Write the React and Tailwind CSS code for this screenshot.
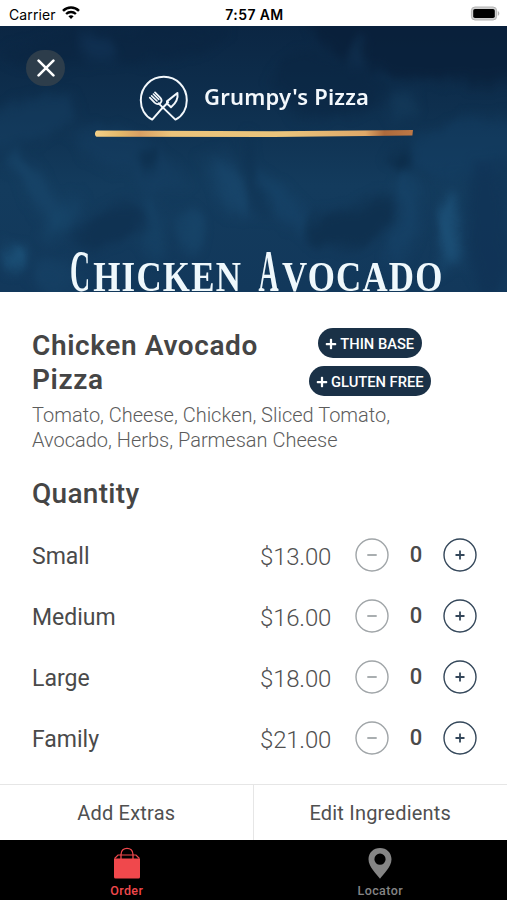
import { useState } from 'react';
import { FaPlus } from 'react-icons/fa';

const SIZES = [
    { name: 'Small', price: 13 },
    { name: 'Medium', price: 16 },
    { name: 'Large', price: 18 },
    { name: 'Family', price: 21 },
];

const TAGS = ['THIN BASE', 'GLUTEN FREE'];

// soft brush strokes of the painted hero background
const STROKES = [
    { x: 120, y: 20, rx: 110, ry: 18, r: -6, c: '#0a2440', o: 0.5 },
    { x: 440, y: 15, rx: 130, ry: 40, r: 8, c: '#091e38', o: 0.7 },
    { x: 330, y: 60, rx: 60, ry: 30, r: 10, c: '#0a2440', o: 0.5 },
    { x: 95, y: 25, rx: 16, ry: 14, r: 30, c: '#163f63', o: 0.4 },
    { x: 358, y: 28, rx: 8, ry: 14, r: 0, c: '#184264', o: 0.4 },
    { x: 402, y: 80, rx: 10, ry: 16, r: -10, c: '#184264', o: 0.45 },
    { x: 30, y: 95, rx: 50, ry: 22, r: -20, c: '#153f64', o: 0.5 },
    { x: 130, y: 130, rx: 60, ry: 20, r: 25, c: '#164166', o: 0.4 },
    { x: 470, y: 120, rx: 60, ry: 30, r: -10, c: '#144066', o: 0.5 },
    { x: 35, y: 165, rx: 14, ry: 45, r: -35, c: '#194a70', o: 0.5 },
    { x: 60, y: 190, rx: 9, ry: 34, r: 35, c: '#194a70', o: 0.4 },
    { x: 148, y: 134, rx: 14, ry: 9, r: 0, c: '#0c2c49', o: 0.7 },
    { x: 112, y: 200, rx: 40, ry: 22, r: -20, c: '#0e2f4f', o: 0.7 },
    { x: 152, y: 200, rx: 9, ry: 36, r: 0, c: '#184a70', o: 0.4 },
    { x: 190, y: 205, rx: 14, ry: 22, r: -25, c: '#194b72', o: 0.5 },
    { x: 226, y: 160, rx: 12, ry: 36, r: -25, c: '#1b4e76', o: 0.5 },
    { x: 285, y: 180, rx: 9, ry: 42, r: -40, c: '#194a70', o: 0.45 },
    { x: 253, y: 150, rx: 5, ry: 40, r: -12, c: '#0e2f4f', o: 0.6 },
    { x: 352, y: 200, rx: 46, ry: 20, r: -22, c: '#0d2d4b', o: 0.75 },
    { x: 403, y: 134, rx: 14, ry: 12, r: 0, c: '#0b2a47', o: 0.8 },
    { x: 403, y: 190, rx: 10, ry: 50, r: 8, c: '#194a70', o: 0.45 },
    { x: 448, y: 205, rx: 12, ry: 42, r: -4, c: '#215c86', o: 0.6 },
    { x: 488, y: 200, rx: 20, ry: 70, r: 0, c: '#0f3154', o: 0.6 },
    { x: 12, y: 232, rx: 10, ry: 14, r: -30, c: '#215f88', o: 0.6 },
    { x: 55, y: 250, rx: 24, ry: 16, r: 0, c: '#18486e', o: 0.4 },
];

function StatusBar() {
    return (
        <div className="flex h-[26px] shrink-0 items-center justify-between bg-white pr-[7px] pl-[9px] pt-[2px] font-['Inter',sans-serif] text-black">
            <div className="flex w-[120px] items-center gap-[6px]">
                <span className="text-[14px] tracking-[0.1px]">Carrier</span>
                <svg className="mb-[2px] h-[14px] w-[18px]" viewBox="0 0 18 14" fill="none">
                    <path d="M1 4.9 C5.5 0.5 12.5 0.5 17 4.9" stroke="black" strokeWidth="2.5" />
                    <path d="M4.1 8 C6.9 5.3 11.1 5.3 13.9 8" stroke="black" strokeWidth="2.4" />
                    <path d="M6.4 10.3 C7.9 8.9 10.1 8.9 11.6 10.3 L9 13 Z" fill="black" />
                </svg>
            </div>
            <span className="text-[14px] font-semibold tracking-[0.4px] whitespace-nowrap">7:57 AM</span>
            <div className="flex w-[120px] justify-end pb-[2px]">
                <svg className="h-[15px] w-[30px]" viewBox="0 0 30 15">
                    <rect x="1.4" y="1" width="25.2" height="13" rx="3.6" fill="#d0d0d0" stroke="#b4b4b4" strokeWidth="1" />
                    <rect x="3.2" y="3" width="21.6" height="9" rx="1.8" fill="#000" />
                    <path d="M27.8 5 C29.8 5.8 29.8 9 27.8 9.8 Z" fill="#b4b4b4" />
                </svg>
            </div>
        </div>
    );
}

function HeroBackdrop() {
    return (
        <svg className="absolute inset-0 h-full w-full" viewBox="0 0 507 266" preserveAspectRatio="none">
            <defs>
                <linearGradient id="sea" x1="0" y1="0" x2="0" y2="1">
                    <stop offset="0" stopColor="#0b2643" />
                    <stop offset="0.3" stopColor="#0e2f4e" />
                    <stop offset="0.6" stopColor="#133b5d" />
                    <stop offset="1" stopColor="#12385b" />
                </linearGradient>
                <filter id="soft" x="-20%" y="-20%" width="140%" height="140%" colorInterpolationFilters="sRGB">
                    <feGaussianBlur stdDeviation="6" result="blurred" />
                    <feTurbulence type="fractalNoise" baseFrequency="0.02 0.014" numOctaves="3" seed="4" result="noise" />
                    <feDisplacementMap in="blurred" in2="noise" scale="28" xChannelSelector="R" yChannelSelector="G" />
                </filter>
            </defs>
            <rect width="507" height="266" fill="url(#sea)" />
            <g filter="url(#soft)">
                {STROKES.map((s, i) => (
                    <ellipse
                        key={i}
                        cx={s.x}
                        cy={s.y}
                        rx={s.rx}
                        ry={s.ry}
                        fill={s.c}
                        opacity={s.o}
                        transform={`rotate(${s.r} ${s.x} ${s.y})`}
                    />
                ))}
            </g>
        </svg>
    );
}

// tall narrow initial followed by smaller capitals
function TitleWord({ text }) {
    return (
        <span className="flex">
            <span className="w-[28px] origin-[0_84%] scale-x-[0.8] scale-y-[1.43]">{text[0]}</span>
            <span>{text.slice(1)}</span>
        </span>
    );
}

function Hero() {
    return (
        <div className="relative h-[266px] shrink-0 bg-[#12385b]">
            <HeroBackdrop />
            <button className="absolute top-[24px] left-[26px] flex h-[36px] w-[39px] items-center justify-center rounded-full bg-[#2d3d4b]">
                <svg className="h-[18px] w-[18px]" viewBox="0 0 18 18" fill="none" stroke="white" strokeWidth="2.6" strokeLinecap="round">
                    <path d="M1.6 1.6 L16.4 16.4 M16.4 1.6 L1.6 16.4" />
                </svg>
            </button>

            <div className="relative flex items-center pt-[49px] pl-[139px] text-[#f3f8fc]">
                <svg className="h-[47px] w-[50px]" viewBox="0 0 50 47" fill="none" stroke="currentColor" strokeWidth="2" strokeLinejoin="round" strokeLinecap="round">
                    <path d="M23.2 33.2 L13.2 44.6 C6 41 1.8 33.5 1.8 25.2 C1.8 11.8 12.2 1.8 24.8 1.8 C37.4 1.8 47.8 11.8 47.8 25.2 C47.8 33.5 43.6 41 36.4 44.6 L19.6 28.4" />
                    <path d="M23.2 33.2 L29.2 27.2" />
                    <path d="M10.8 22.6 L15.6 27.6 C17.6 29.4 20 29.2 21.4 28 C22.8 26.6 22.8 24.4 21.2 22.6 L16 17.4" strokeWidth="1.8" />
                    <path d="M12.6 20.8 L18 26 M14.4 19 L19.8 24.4" strokeWidth="1.6" />
                    <path d="M28 26.4 L38.4 18 C39.2 22.6 37 28.2 32 32.2 C30.6 30.8 29.6 30 28 28.8 Z" />
                </svg>
                <span className="ml-[15px] pb-[5px] font-['Noto_Sans','Open_Sans',sans-serif] text-[22px] leading-[30px] font-semibold tracking-[0.2px] whitespace-nowrap">
                    Grumpy's Pizza
                </span>
            </div>

            <svg className="absolute top-[103px] left-[94px] h-[9px] w-[320px]" viewBox="0 0 320 9">
                <defs>
                    <linearGradient id="gold">
                        <stop offset="0" stopColor="#f3cf88" />
                        <stop offset="0.08" stopColor="#e5b96a" />
                        <stop offset="0.14" stopColor="#d9a063" />
                        <stop offset="0.24" stopColor="#ecc47b" />
                        <stop offset="0.6" stopColor="#e9c47c" />
                        <stop offset="0.85" stopColor="#dfa868" />
                        <stop offset="0.91" stopColor="#ad6a3c" />
                        <stop offset="1" stopColor="#bd7846" />
                    </linearGradient>
                </defs>
                <path d="M3 1.6 L180 2.2 L319 1 L318.4 6.6 L180 8 L2.6 7.8 C0.4 6.8 0.4 2.8 3 1.6 Z" fill="url(#gold)" />
            </svg>

            <h1 className="absolute top-[230px] left-[70px] flex origin-left scale-x-[0.83] gap-[20px] font-['Liberation_Serif',serif] text-[42px] leading-[42px] font-bold tracking-[1.5px] whitespace-nowrap text-[#eff8fc] uppercase">
                <TitleWord text="Chicken" />
                <TitleWord text="Avocado" />
            </h1>
        </div>
    );
}

function Tag({ label }) {
    return (
        <span className="flex h-[30px] items-center gap-[3px] rounded-full bg-[#1a3147] px-[7.5px] pt-[2px] text-[14.7px] leading-[28px] font-medium whitespace-nowrap text-white">
            <FaPlus className="h-[12px] w-[12px]" />
            {label}
        </span>
    );
}

function RoundButton({ muted, path, onClick }) {
    return (
        <button onClick={onClick} className={`h-[34px] w-[34px] ${muted ? 'text-[#a0a5a8]' : 'text-[#34475a]'}`}>
            <svg className="h-full w-full" viewBox="0 0 34 34" fill="none" stroke="currentColor">
                <circle cx="17" cy="17" r="16" strokeWidth="1.4" />
                <path d={path} strokeWidth="1.8" />
            </svg>
        </button>
    );
}

function Stepper({ value, onChange }) {
    return (
        <div className="flex items-center">
            <RoundButton muted={value === 0} path="M12.3 17 H21.7" onClick={() => onChange(Math.max(0, value - 1))} />
            <span className="w-[54px] text-center text-[22px] leading-[34px] font-medium text-[#4a4a4a]">{value}</span>
            <RoundButton path="M12.5 17 H21.5 M17 12.5 V21.5" onClick={() => onChange(value + 1)} />
        </div>
    );
}

function SizeRow({ size, value, onChange }) {
    return (
        <div className="flex h-[61px] items-center">
            <span className="w-[228px] pt-[6px] text-[23px] text-[#4a4a4a]">{size.name}</span>
            <span className="w-[95px] pt-[5px] text-[24px] font-light tracking-[-0.2px] text-[#505050]">${size.price.toFixed(2)}</span>
            <Stepper value={value} onChange={onChange} />
        </div>
    );
}

function TabBar() {
    return (
        <nav className="grid h-[60px] shrink-0 grid-cols-2 bg-black text-[12.5px] leading-[14px] font-medium tracking-[0.4px]">
            <a className="flex flex-col items-center pt-[7px] text-[#f0484c]">
                <svg className="h-[32px] w-[28px]" viewBox="0 0 28 32">
                    <path d="M1 11.5 H27 V30 Q27 31.5 25.5 31.5 H2.5 Q1 31.5 1 30 Z" fill="currentColor" />
                    <path d="M1.6 11.5 L5 8 H23 L26.4 11.5" fill="none" stroke="currentColor" strokeWidth="1.2" />
                    <path d="M8 12 V7.5 C8 -0.8 20 -0.8 20 7.5 V12" fill="none" stroke="currentColor" strokeWidth="1.3" />
                </svg>
                <span className="mt-[5px]">Order</span>
            </a>
            <a className="flex flex-col items-center pt-[7px] text-[#858585]">
                <svg className="h-[32px] w-[24px]" viewBox="0 0 24 32">
                    <path
                        fillRule="evenodd"
                        fill="currentColor"
                        d="M12 1 C5.5 1 0.5 5.8 0.5 12.2 C0.5 20 9 27.5 12 31.8 C15 27.5 23.5 20 23.5 12.2 C23.5 5.8 18.5 1 12 1 Z M12 6.6 A5.6 5.6 0 1 1 12 17.8 A5.6 5.6 0 1 1 12 6.6 Z"
                    />
                </svg>
                <span className="mt-[5px]">Locator</span>
            </a>
        </nav>
    );
}

export default function App() {
    const [counts, setCounts] = useState([0, 0, 0, 0]);

    const updateCount = (index, value) => {
        setCounts(counts.map((count, i) => (i === index ? value : count)));
    };

    return (
        <div className="flex h-[900px] w-[507px] flex-col overflow-hidden bg-white font-['Roboto',sans-serif]">
            <StatusBar />
            <Hero />

            <main className="flex grow flex-col pr-[30px] pl-[32px]">
                <div className="flex justify-between pt-[36px]">
                    <h2 className="w-[240px] pt-px text-[28px] leading-[34px] font-semibold tracking-[0.6px] text-[#454545]">
                        Chicken Avocado Pizza
                    </h2>
                    <div className="mr-[46px] flex flex-col items-center gap-[8px]">
                        {TAGS.map((tag) => (
                            <Tag key={tag} label={tag} />
                        ))}
                    </div>
                </div>
                <p className="mt-[6px] w-[400px] text-[20px] leading-[24.5px] font-light text-[#5c5c5c]">
                    Tomato, Cheese, Chicken, Sliced Tomato, Avocado, Herbs, Parmesan Cheese
                </p>
                <h3 className="mt-[25px] text-[28px] leading-[34px] font-medium tracking-[0.3px] text-[#454545]">Quantity</h3>
                <div className="mt-[13px]">
                    {SIZES.map((size, i) => (
                        <SizeRow key={size.name} size={size} value={counts[i]} onChange={(value) => updateCount(i, value)} />
                    ))}
                </div>
            </main>

            <div className="grid h-[56px] shrink-0 grid-cols-2 border-t border-[#e6e6e6] text-[20px] tracking-[0.2px] text-[#505050]">
                <button className="border-r border-[#e6e6e6]">Add Extras</button>
                <button>Edit Ingredients</button>
            </div>
            <TabBar />
        </div>
    );
}
